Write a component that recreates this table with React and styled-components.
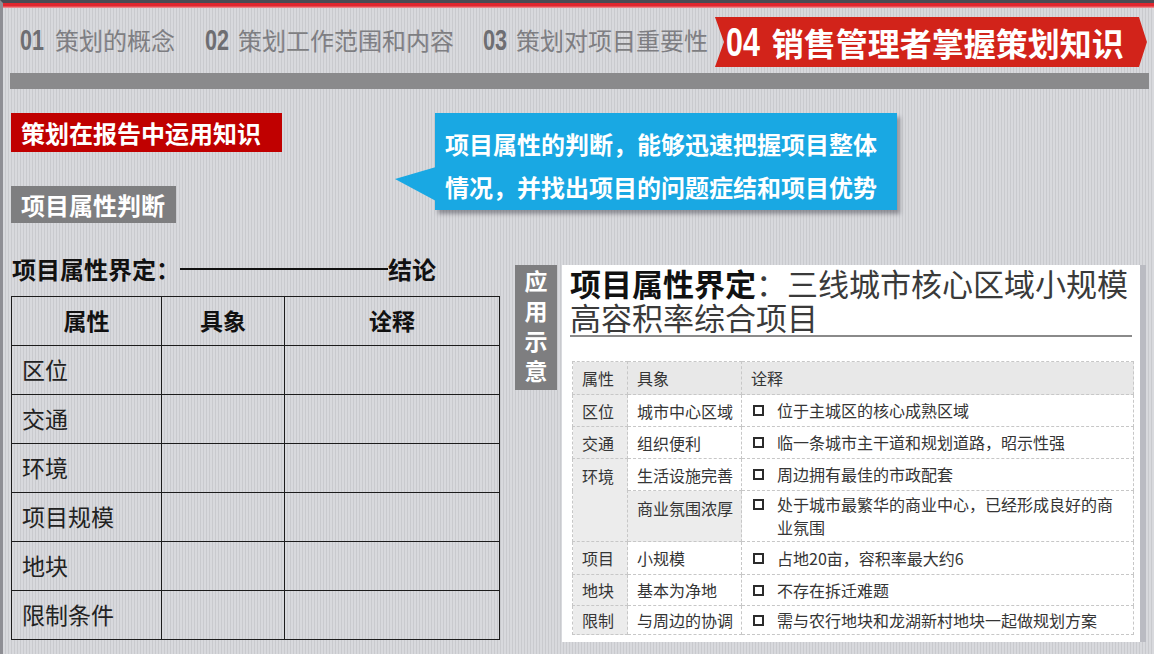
import React from "react";
import styled, { createGlobalStyle } from "styled-components";

const GlobalStyle = createGlobalStyle`
  html, body {
    margin: 0;
    padding: 0;
  }
  body {
    font-family: "Noto Sans CJK SC", "Noto Sans", sans-serif;
  }
`;

const Page = styled.div`
  width: 1154px;
  height: 654px;
  box-sizing: border-box;
  overflow: hidden;
  display: flex;
  flex-direction: column;
  border-top: 3px solid #4b4b53;
  border-left: 3px solid #8e8e94;
  background: repeating-linear-gradient(90deg, #d8d9dd 0 2px, #c9cace 2px 3px);

  & > * {
    flex-shrink: 0;
  }
`;

const RedStrip = styled.div`
  height: 5px;
  background: linear-gradient(#e1262e 0, #e1262e 55%, #f1a0a3 100%);
`;

const Nav = styled.nav`
  display: flex;
  align-items: center;
  height: 50px;
  margin-top: 9px;
  padding-left: 17px;
`;

const NavItem = styled.div`
  display: flex;
  align-items: center;
  flex: none;
  gap: ${(p) => p.gap}px;
  margin-right: ${(p) => p.space}px;
  padding-bottom: 5px;
  font-size: 24px;
  color: #7e7e82;
  white-space: nowrap;
`;

/* condensed tall digits, squeezed from Liberation Sans bold */
const Num = styled.span`
  display: inline-block;
  font-family: "Liberation Sans", Arial, sans-serif;
  font-weight: 700;
  font-size: ${(p) => p.size}px;
  line-height: 1;
  color: ${(p) => p.color};
  transform: scaleX(${(p) => p.scale});
  transform-origin: left center;
  margin-right: ${(p) => -p.trim}px;
`;

const ActiveTab = styled.div`
  display: flex;
  align-items: center;
  flex: none;
  gap: 12px;
  width: 432px;
  height: 50px;
  box-sizing: border-box;
  padding-left: 11px;
  background: #d2231a;
  color: #fff;
  font-size: 32px;
  font-weight: 700;
  white-space: nowrap;
  clip-path: polygon(0 0, 424px 0, 100% 50%, 424px 100%, 0 100%, 9px 50%);
`;

const GreyBar = styled.div`
  height: 16px;
  margin: 6px 5px 0 7px;
  background: #8a8a8c;
`;

const TopSection = styled.section`
  display: flex;
  align-items: flex-start;
  margin-top: 24px;
  padding-left: 8px;
`;

const LabelColumn = styled.div`
  display: flex;
  flex-direction: column;
  align-items: flex-start;
  gap: 34px;
`;

const Tag = styled.div`
  width: ${(p) => p.width}px;
  height: ${(p) => p.height}px;
  box-sizing: border-box;
  padding-left: 10px;
  display: flex;
  align-items: center;
  background: ${(p) => p.bg};
  color: #fff;
  font-size: 24px;
  font-weight: 700;
  white-space: nowrap;
`;

const Callout = styled.div`
  position: relative;
  width: 462px;
  box-sizing: border-box;
  margin-left: 153px;
  padding: 9px 10px 2px 10px;
  background: #19a8e3;
  color: #fff;
  font-size: 24px;
  font-weight: 700;
  line-height: 43px;
  box-shadow: 3px 4px 4px rgba(60, 60, 70, 0.45);

  &::before {
    content: "";
    position: absolute;
    left: -40px;
    top: 54px;
    width: 41px;
    height: 34px;
    background: #19a8e3;
    clip-path: polygon(0 12px, 100% 0, 100% 100%);
  }
`;

const BottomSection = styled.section`
  display: flex;
  align-items: flex-start;
  margin-top: 30px;
  padding-left: 8px;
`;

const LeftColumn = styled.div`
  display: flex;
  flex-direction: column;
  width: 488px;
`;

const Heading = styled.h2`
  margin: 0 0 0 1px;
  display: flex;
  align-items: center;
  height: 30px;
  font-size: 24px;
  font-weight: 700;
  color: #111;
  white-space: nowrap;
`;

const Rule = styled.span`
  display: inline-block;
  width: 208px;
  height: 2px;
  margin-top: 2px;
  background: #111;
`;

const BlankTable = styled.table`
  margin-top: 13px;
  width: 488px;
  border-collapse: collapse;
  table-layout: fixed;

  th,
  td {
    height: 45px;
    padding: 0 0 3px 10px;
    border: 1px solid #1c1c1c;
    font-size: 23px;
    color: #222;
    text-align: left;
  }

  th {
    padding: 0 0 3px 0;
    font-weight: 700;
    text-align: center;
    color: #111;
  }
`;

const RightColumn = styled.div`
  display: flex;
  align-items: flex-start;
  gap: 5px;
  margin-left: 16px;
  margin-top: 12px;
`;

const SideTag = styled.div`
  width: 42px;
  height: 125px;
  box-sizing: border-box;
  padding-top: 5px;
  display: flex;
  justify-content: center;
  background: #7e7e80;
  color: #fff;
  font-size: 23px;
  font-weight: 700;
  line-height: 42px;
  letter-spacing: 7px;
  writing-mode: vertical-rl;
  text-orientation: upright;
`;

const Panel = styled.div`
  width: 578px;
  height: 377px;
  box-sizing: border-box;
  padding: 1px 8px 0 8px;
  background: #fff;
  box-shadow: 6px 0 0 #babbc2;
`;

const PanelTitle = styled.h3`
  margin: 0;
  padding-bottom: 1px;
  border-bottom: 2px solid #8a8a8a;
  font-size: 31px;
  font-weight: 400;
  line-height: 34px;
  color: #3a3a3a;

  b {
    font-weight: 700;
    color: #111;
  }
`;

const InfoTable = styled.table`
  margin: 24px 0 0 2px;
  width: 561px;
  border-collapse: collapse;
  table-layout: fixed;

  th,
  td {
    padding: 0 0 0 9px;
    border: 1px dashed #c7c7c7;
    font-size: 16px;
    font-weight: 400;
    color: #353535;
    text-align: left;
    vertical-align: middle;
    background: #fff;
    white-space: nowrap;
  }

  th {
    background: #e8e8e8;
  }

  td:first-child {
    background: #ececec;
  }
`;

const InfoRow = styled.tr`
  height: ${(p) => p.h}px;
`;

const TopCell = styled.td`
  && {
    vertical-align: top;
    padding-top: 5px;
    background: ${(p) => p.bg || "#ececec"};
  }
`;

const Note = styled.div`
  display: flex;
  align-items: flex-start;
  line-height: 23px;
  padding-right: 10px;
  white-space: normal;
`;

const Box = styled.span`
  flex: none;
  width: 11px;
  height: 11px;
  box-sizing: border-box;
  margin: 6px 13px 0 2px;
  border: 2px solid #2b2b2b;
`;

const navItems = [
  { num: "01", label: "策划的概念", gap: 11, space: 30 },
  { num: "02", label: "策划工作范围和内容", gap: 9, space: 29 },
  { num: "03", label: "策划对项目重要性", gap: 9, space: 7 },
];

const blankRows = ["区位", "交通", "环境", "项目规模", "地块", "限制条件"];

const infoRows = [
  { key: "区位", item: "城市中心区域", note: "位于主城区的核心成熟区域", h: 32 },
  { key: "交通", item: "组织便利", note: "临一条城市主干道和规划道路，昭示性强", h: 32 },
  { key: "项目", item: "小规模", note: "占地20亩，容积率最大约6", h: 33 },
  { key: "地块", item: "基本为净地", note: "不存在拆迁难题", h: 31 },
  { key: "限制", item: "与周边的协调", note: "需与农行地块和龙湖新村地块一起做规划方案", h: 29 },
];

const NoteCell = ({ children, top }) => (
  <td style={top ? { verticalAlign: "top", paddingTop: 2 } : undefined}>
    <Note>
      <Box />
      <span>{children}</span>
    </Note>
  </td>
);

const InfoLine = ({ row }) => (
  <InfoRow h={row.h}>
    <td>{row.key}</td>
    <td>{row.item}</td>
    <NoteCell>{row.note}</NoteCell>
  </InfoRow>
);

const App = () => {
  return (
    <>
      <GlobalStyle />
      <Page>
        <RedStrip />
        <Nav>
          {navItems.map((item) => (
            <NavItem key={item.num} gap={item.gap} space={item.space}>
              <Num size={30} scale={0.72} trim={9.4} color="#6e6e72">
                {item.num}
              </Num>
              <span>{item.label}</span>
            </NavItem>
          ))}
          <ActiveTab>
            <Num size={40} scale={0.76} trim={10.7} color="#fff">
              04
            </Num>
            <span>销售管理者掌握策划知识</span>
          </ActiveTab>
        </Nav>
        <GreyBar />

        <TopSection>
          <LabelColumn>
            <Tag width={271} height={39} bg="#c00000">
              策划在报告中运用知识
            </Tag>
            <Tag width={165} height={37} bg="#7e7e80">
              项目属性判断
            </Tag>
          </LabelColumn>
          <Callout>
            项目属性的判断，能够迅速把握项目整体
            <br />
            情况，并找出项目的问题症结和项目优势
          </Callout>
        </TopSection>

        <BottomSection>
          <LeftColumn>
            <Heading>
              项目属性界定：<Rule />结论
            </Heading>
            <BlankTable>
              <colgroup>
                <col style={{ width: 150 }} />
                <col style={{ width: 123 }} />
                <col style={{ width: 215 }} />
              </colgroup>
              <thead>
                <tr>
                  <th>属性</th>
                  <th>具象</th>
                  <th>诠释</th>
                </tr>
              </thead>
              <tbody>
                {blankRows.map((name) => (
                  <tr key={name}>
                    <td>{name}</td>
                    <td />
                    <td />
                  </tr>
                ))}
              </tbody>
            </BlankTable>
          </LeftColumn>

          <RightColumn>
            <SideTag>应用示意</SideTag>
            <Panel>
              <PanelTitle>
                <b>项目属性界定</b>：三线城市核心区域小规模高容积率综合项目
              </PanelTitle>
              <InfoTable>
                <colgroup>
                  <col style={{ width: 55 }} />
                  <col style={{ width: 114 }} />
                  <col style={{ width: 392 }} />
                </colgroup>
                <thead>
                  <InfoRow h={33}>
                    <th>属性</th>
                    <th>具象</th>
                    <th>诠释</th>
                  </InfoRow>
                </thead>
                <tbody>
                  <InfoLine row={infoRows[0]} />
                  <InfoLine row={infoRows[1]} />
                  <InfoRow h={32}>
                    <TopCell rowSpan={2}>环境</TopCell>
                    <td>生活设施完善</td>
                    <NoteCell>周边拥有最佳的市政配套</NoteCell>
                  </InfoRow>
                  <InfoRow h={51}>
                    <TopCell bg="#fff">商业氛围浓厚</TopCell>
                    <NoteCell top>处于城市最繁华的商业中心，已经形成良好的商业氛围</NoteCell>
                  </InfoRow>
                  <InfoLine row={infoRows[2]} />
                  <InfoLine row={infoRows[3]} />
                  <InfoLine row={infoRows[4]} />
                </tbody>
              </InfoTable>
            </Panel>
          </RightColumn>
        </BottomSection>
      </Page>
    </>
  );
};

export default App;
